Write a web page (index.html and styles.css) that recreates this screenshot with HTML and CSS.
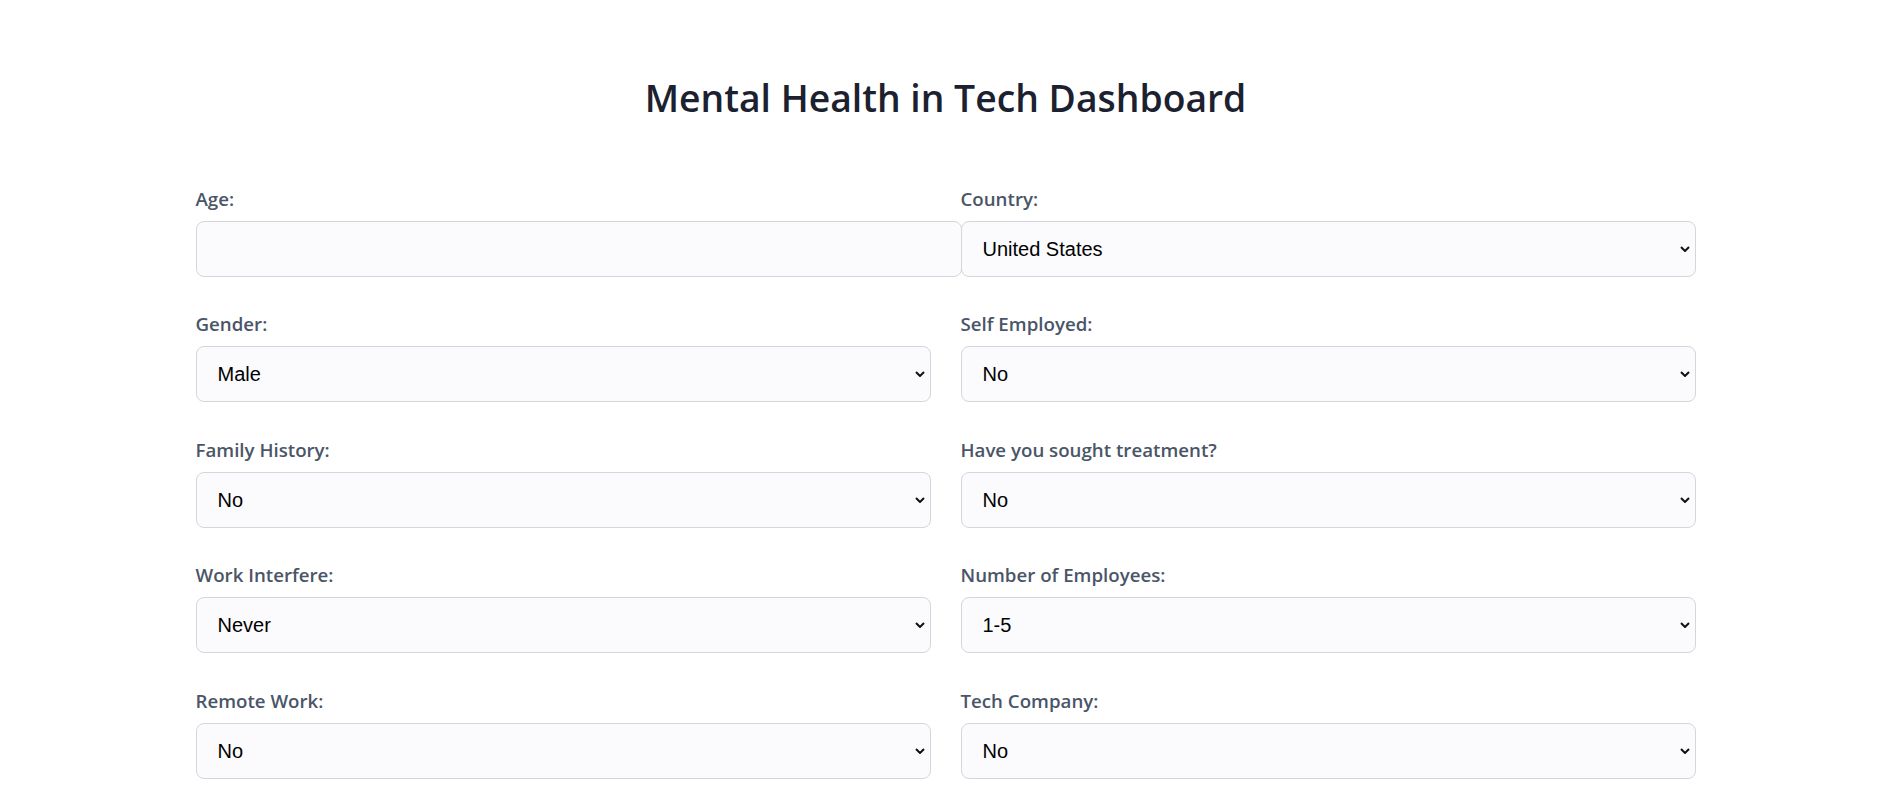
FILE: index.html
```html
<!DOCTYPE html>
<html lang="en">
<head>
<meta charset="utf-8">
<title>Mental Health in Tech Dashboard</title>
<link rel="stylesheet" href="styles.css">
</head>
<body>
<div class="container">
  <h1 class="title">Mental Health in Tech Dashboard</h1>
  <form class="form-grid">
    <div class="form-group">
      <label class="field-label" for="age">Age:</label>
      <input class="field-input" type="number" id="age">
    </div>
    <div class="form-group">
      <label class="field-label" for="country">Country:</label>
      <div class="select-wrap">
        <select class="field-select" id="country"><option>United States</option></select>
        <svg class="chevron" viewBox="0 0 10 6" width="10" height="6"><path d="M1 1l4 4 4-4" fill="none" stroke="#111" stroke-width="2"/></svg>
      </div>
    </div>
    <div class="form-group">
      <label class="field-label" for="gender">Gender:</label>
      <div class="select-wrap">
        <select class="field-select" id="gender"><option>Male</option></select>
        <svg class="chevron" viewBox="0 0 10 6" width="10" height="6"><path d="M1 1l4 4 4-4" fill="none" stroke="#111" stroke-width="2"/></svg>
      </div>
    </div>
    <div class="form-group">
      <label class="field-label" for="self">Self Employed:</label>
      <div class="select-wrap">
        <select class="field-select" id="self"><option>No</option></select>
        <svg class="chevron" viewBox="0 0 10 6" width="10" height="6"><path d="M1 1l4 4 4-4" fill="none" stroke="#111" stroke-width="2"/></svg>
      </div>
    </div>
    <div class="form-group">
      <label class="field-label" for="family">Family History:</label>
      <div class="select-wrap">
        <select class="field-select" id="family"><option>No</option></select>
        <svg class="chevron" viewBox="0 0 10 6" width="10" height="6"><path d="M1 1l4 4 4-4" fill="none" stroke="#111" stroke-width="2"/></svg>
      </div>
    </div>
    <div class="form-group">
      <label class="field-label" for="treatment">Have you sought treatment?</label>
      <div class="select-wrap">
        <select class="field-select" id="treatment"><option>No</option></select>
        <svg class="chevron" viewBox="0 0 10 6" width="10" height="6"><path d="M1 1l4 4 4-4" fill="none" stroke="#111" stroke-width="2"/></svg>
      </div>
    </div>
    <div class="form-group">
      <label class="field-label" for="work">Work Interfere:</label>
      <div class="select-wrap">
        <select class="field-select" id="work"><option>Never</option></select>
        <svg class="chevron" viewBox="0 0 10 6" width="10" height="6"><path d="M1 1l4 4 4-4" fill="none" stroke="#111" stroke-width="2"/></svg>
      </div>
    </div>
    <div class="form-group">
      <label class="field-label" for="employees">Number of Employees:</label>
      <div class="select-wrap">
        <select class="field-select" id="employees"><option>1-5</option></select>
        <svg class="chevron" viewBox="0 0 10 6" width="10" height="6"><path d="M1 1l4 4 4-4" fill="none" stroke="#111" stroke-width="2"/></svg>
      </div>
    </div>
    <div class="form-group">
      <label class="field-label" for="remote">Remote Work:</label>
      <div class="select-wrap">
        <select class="field-select" id="remote"><option>No</option></select>
        <svg class="chevron" viewBox="0 0 10 6" width="10" height="6"><path d="M1 1l4 4 4-4" fill="none" stroke="#111" stroke-width="2"/></svg>
      </div>
    </div>
    <div class="form-group">
      <label class="field-label" for="tech">Tech Company:</label>
      <div class="select-wrap">
        <select class="field-select" id="tech"><option>No</option></select>
        <svg class="chevron" viewBox="0 0 10 6" width="10" height="6"><path d="M1 1l4 4 4-4" fill="none" stroke="#111" stroke-width="2"/></svg>
      </div>
    </div>
  </form>
</div>
</body>
</html>
```
FILE: styles.css
```css
html, body {
  margin: 0;
  padding: 0;
  background: #ffffff;
}
body {
  font-family: "Open Sans", "Noto Sans", sans-serif;
  color: #1f2430;
}
.container {
  width: 1500px;
  margin: 0 auto;
  padding-top: 72px;
}
.title {
  margin: 0 0 63px;
  text-align: center;
  font-size: 37.3px;
  font-weight: 600;
  color: #1c2130;
}
.form-grid {
  display: grid;
  grid-template-columns: 1fr 1fr;
  column-gap: 30px;
  row-gap: 34.4px;
}
.form-group {
  display: flex;
  flex-direction: column;
  align-items: flex-start;
}
.field-label {
  font-size: 18.7px;
  font-weight: 600;
  color: #4a5568;
  margin-bottom: 10px;
}
.select-wrap {
  position: relative;
  width: 100%;
}
.field-input,
.field-select {
  display: block;
  width: 100%;
  height: 56px;
  padding: 15px;
  border: 1px solid #d4d6db;
  border-radius: 8px;
  background: #fbfbfd;
  font-family: "Liberation Sans", Arial, sans-serif;
  font-size: 20px;
  color: #000;
  margin: 0;
}
.field-input {
  box-sizing: border-box;
  width: calc(100% + 31px);
}
.field-select {
  box-sizing: border-box;
  padding-left: 21px;
  -webkit-appearance: none;
  appearance: none;
}
.chevron {
  position: absolute;
  right: 6px;
  top: 25px;
  pointer-events: none;
}
```
